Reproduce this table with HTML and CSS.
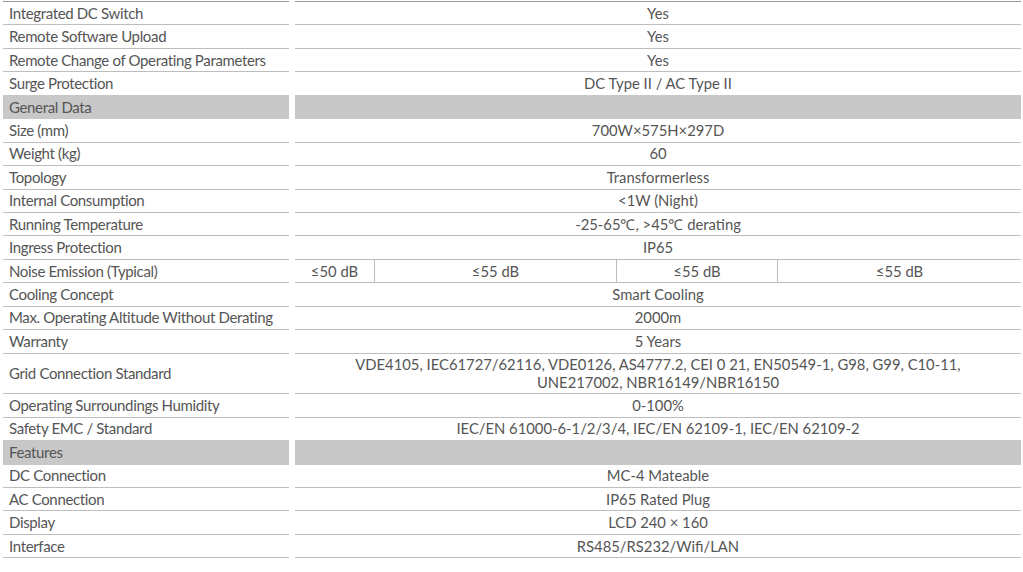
FILE: index.html
```html
<!DOCTYPE html>
<html lang="en">
<head>
    <meta charset="UTF-8">
    <meta name="viewport" content="width=device-width, initial-scale=1.0">
    <title>Inverter Specifications</title>
    <link rel="stylesheet" href="styles.css">
</head>
<body>

    <div class="specs">
        <div class="row first">
            <div class="label">Integrated DC Switch</div>
            <div class="value">Yes</div>
        </div>
        <div class="row">
            <div class="label">Remote Software Upload</div>
            <div class="value">Yes</div>
        </div>
        <div class="row">
            <div class="label">Remote Change of Operating Parameters</div>
            <div class="value">Yes</div>
        </div>
        <div class="row">
            <div class="label">Surge Protection</div>
            <div class="value">DC Type II / AC Type II</div>
        </div>

        <div class="row section">
            <div class="label">General Data</div>
            <div class="value"></div>
        </div>
        <div class="row">
            <div class="label">Size (mm)</div>
            <div class="value">700W×575H×297D</div>
        </div>
        <div class="row">
            <div class="label">Weight (kg)</div>
            <div class="value">60</div>
        </div>
        <div class="row">
            <div class="label">Topology</div>
            <div class="value">Transformerless</div>
        </div>
        <div class="row">
            <div class="label">Internal Consumption</div>
            <div class="value">&lt;1W (Night)</div>
        </div>
        <div class="row">
            <div class="label">Running Temperature</div>
            <div class="value">-25-65℃, &gt;45℃ derating</div>
        </div>
        <div class="row">
            <div class="label">Ingress Protection</div>
            <div class="value">IP65</div>
        </div>
        <div class="row">
            <div class="label">Noise Emission (Typical)</div>
            <div class="value split">
                <span class="w80">≤50 dB</span>
                <span class="w242">≤55 dB</span>
                <span class="w161">≤55 dB</span>
                <span class="rest">≤55 dB</span>
            </div>
        </div>
        <div class="row">
            <div class="label">Cooling Concept</div>
            <div class="value">Smart Cooling</div>
        </div>
        <div class="row">
            <div class="label">Max. Operating Altitude Without Derating</div>
            <div class="value">2000m</div>
        </div>
        <div class="row">
            <div class="label">Warranty</div>
            <div class="value">5 Years</div>
        </div>
        <div class="row">
            <div class="label">Grid Connection Standard</div>
            <div class="value">VDE4105, IEC61727/62116, VDE0126, AS4777.2, CEI 0 21, EN50549-1, G98, G99, C10-11,<br>UNE217002, NBR16149/NBR16150</div>
        </div>
        <div class="row">
            <div class="label">Operating Surroundings Humidity</div>
            <div class="value">0-100%</div>
        </div>
        <div class="row">
            <div class="label">Safety EMC / Standard</div>
            <div class="value">IEC/EN 61000-6-1/2/3/4, IEC/EN 62109-1, IEC/EN 62109-2</div>
        </div>

        <div class="row section">
            <div class="label">Features</div>
            <div class="value"></div>
        </div>
        <div class="row">
            <div class="label">DC Connection</div>
            <div class="value">MC-4 Mateable</div>
        </div>
        <div class="row">
            <div class="label">AC Connection</div>
            <div class="value">IP65 Rated Plug</div>
        </div>
        <div class="row">
            <div class="label">Display</div>
            <div class="value">LCD 240 × 160</div>
        </div>
        <div class="row">
            <div class="label">Interface</div>
            <div class="value">RS485/RS232/Wifi/LAN</div>
        </div>
    </div>

</body>
</html>
```

FILE: styles.css
```css
body {
    margin: 0;
    padding: 0;
    font-family: 'Lato', 'Open Sans', sans-serif;
    font-size: 14.8px;
    color: #555;
    background: #fff;
    overflow: hidden;
}

.specs {
    padding: 1px 2px 0 3px;
}

.row {
    display: grid;
    grid-template-columns: 286px 1fr;
    column-gap: 6px;
}

.label,
.value {
    padding: 2.8px 6px 2.45px;
    line-height: 17.2px;
    border-bottom: 1px solid #bdbdbd;
}

.label {
    display: flex;
    align-items: center;
    font-size: 15px;
    letter-spacing: -0.35px;
}

.value {
    text-align: center;
}

.first .label,
.first .value {
    border-top: 1px solid #999;
}

/* grey band for section titles */
.section .label,
.section .value {
    background: #c8c8c8;
    border-bottom-color: #c8c8c8;
}

.row:has(+ .section) .label,
.row:has(+ .section) .value {
    border-bottom-color: #c8c8c8;
}

/* noise row is split into four cells */
.split {
    display: flex;
    padding: 0;
}

.split span {
    padding: 2.8px 6px 2.45px;
    box-sizing: border-box;
    border-right: 1px solid #bdbdbd;
}

.split .w80 { width: 80px; }
.split .w242 { width: 242px; }
.split .w161 { width: 161px; }

.split .rest {
    flex: 1;
    border-right: none;
}
```
